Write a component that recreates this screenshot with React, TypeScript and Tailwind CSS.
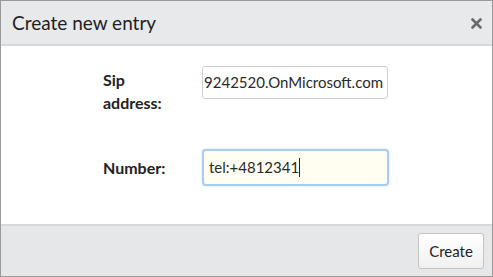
export default function App() {
  return (
    <div
      className="w-[493px] h-[277px] flex flex-col border border-[#9a9a9a] bg-white text-[#222]"
      style={{ fontFamily: 'Lato, "Liberation Sans", sans-serif' }}
    >
      <div className="h-[45px] shrink-0 flex items-center justify-between bg-[#e8e9eb] border-b-2 border-[#d6d7da] pl-[11px] pr-[10px]">
        <h1 className="text-[19px] leading-none text-[#1f1f1f]">Create new entry</h1>
        <svg width="11" height="11" viewBox="0 0 11 11" className="mt-[1px]">
          <path d="M1.5 1.5L9.5 9.5M9.5 1.5L1.5 9.5" stroke="#6b6b6b" strokeWidth="2.6" strokeLinecap="round" />
        </svg>
      </div>

      <div className="flex-1 flex flex-col gap-[35px] pt-[20px] pl-[102px]">
        <div className="flex items-start">
          <div className="w-[99px] text-[16px] font-bold leading-[23px] pt-[2px]">
            Sip
            <br />
            address:
          </div>
          <div className="w-[186px] h-[33px] flex items-center justify-end overflow-hidden whitespace-nowrap rounded-[3px] border border-[#cfcfcf] pr-[4px] text-[15px] text-[#2a2a2a]">
            sip:user@contoso20219242520.OnMicrosoft.com
          </div>
        </div>
        <div className="flex items-center">
          <div className="w-[99px] text-[16px] font-bold">Number:</div>
          <div className="w-[187px] h-[37px] flex items-center rounded-[4px] border-2 border-[#a8cdf5] bg-[#fffef0] px-[5px] text-[15px] text-[#2a2a2a] shadow-[0_0_2px_#bcd8f7]">
            tel:+4812341
            <span className="w-px h-[19px] bg-[#222]" />
          </div>
        </div>
      </div>

      <div className="h-[52px] shrink-0 flex items-center justify-end bg-[#e6e7e9] border-t-2 border-[#d8d9dc] pr-[8px]">
        <button className="h-[36px] w-[66px] rounded-[3px] border border-[#c4c4c4] bg-gradient-to-b from-white to-[#f0f0f0] text-[15px] text-[#222]">
          Create
        </button>
      </div>
    </div>
  )
}
